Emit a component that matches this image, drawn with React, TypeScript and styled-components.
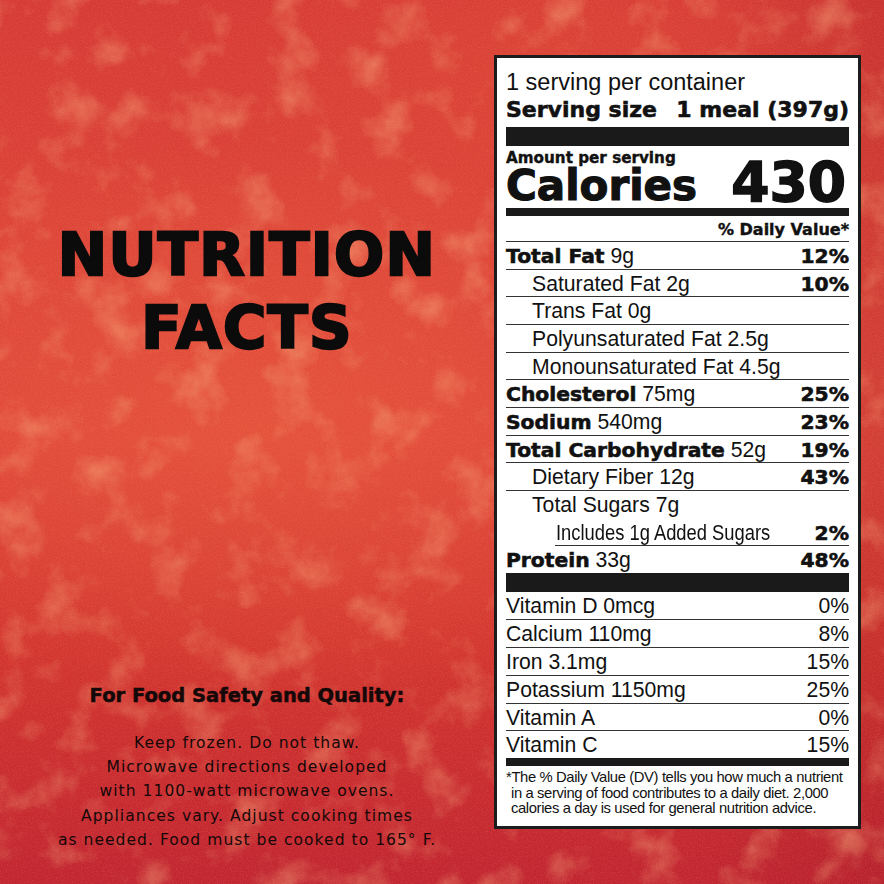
import React from 'react';
import styled, { createGlobalStyle } from 'styled-components';

const LABEL_FONT = '"Liberation Sans", Arial, sans-serif';
const HEAVY_FONT = '"DejaVu Sans", Verdana, sans-serif';

// soft mottled wash + fine grain, drawn as an svg filter
const TEXTURE =
  "url(\"data:image/svg+xml;utf8,<svg xmlns='http://www.w3.org/2000/svg' width='884' height='884'>" +
  "<filter id='a' x='0' y='0' width='100%' height='100%'><feTurbulence type='fractalNoise' baseFrequency='0.022' numOctaves='5' seed='11'/>" +
  "<feColorMatrix values='0 0 0 0 0.95  0 0 0 0 0.44  0 0 0 0 0.22  0 0 0 1.1 -0.55'/></filter>" +
  "<filter id='b' x='0' y='0' width='100%' height='100%'><feTurbulence type='fractalNoise' baseFrequency='0.8' numOctaves='2' seed='3'/>" +
  "<feColorMatrix values='0 0 0 0 0.94  0 0 0 0 0.42  0 0 0 0 0.26  0 0 0 0.35 -0.15'/></filter>" +
  "<rect width='884' height='884' filter='url(%23a)'/><rect width='884' height='884' filter='url(%23b)'/></svg>\")";

const GlobalStyle = createGlobalStyle`
  html, body {
    margin: 0;
    padding: 0;
  }
  body {
    font-family: ${LABEL_FONT};
    color: #111;
  }
`;

interface INutrient {
  id: number;
  name: string;
  amount?: string;
  dv?: string;
  level: 0 | 1 | 2;
  bold?: boolean;
  noLine?: boolean;
}

const NUTRIENTS: INutrient[] = [
  { id: 1, name: 'Total Fat', amount: '9g', dv: '12%', level: 0, bold: true },
  { id: 2, name: 'Saturated Fat', amount: '2g', dv: '10%', level: 1 },
  { id: 3, name: 'Trans Fat', amount: '0g', level: 1 },
  { id: 4, name: 'Polyunsaturated Fat', amount: '2.5g', level: 1 },
  { id: 5, name: 'Monounsaturated Fat', amount: '4.5g', level: 1 },
  { id: 6, name: 'Cholesterol', amount: '75mg', dv: '25%', level: 0, bold: true },
  { id: 7, name: 'Sodium', amount: '540mg', dv: '23%', level: 0, bold: true },
  { id: 8, name: 'Total Carbohydrate', amount: '52g', dv: '19%', level: 0, bold: true },
  { id: 9, name: 'Dietary Fiber', amount: '12g', dv: '43%', level: 1 },
  { id: 10, name: 'Total Sugars', amount: '7g', level: 1, noLine: true },
  { id: 11, name: 'Includes 1g Added Sugars', dv: '2%', level: 2 },
  { id: 12, name: 'Protein', amount: '33g', dv: '48%', level: 0, bold: true, noLine: true },
];

const VITAMINS = [
  { id: 1, name: 'Vitamin D 0mcg', dv: '0%' },
  { id: 2, name: 'Calcium 110mg', dv: '8%' },
  { id: 3, name: 'Iron 3.1mg', dv: '15%' },
  { id: 4, name: 'Potassium 1150mg', dv: '25%' },
  { id: 5, name: 'Vitamin A', dv: '0%' },
  { id: 6, name: 'Vitamin C', dv: '15%' },
];

const Page = styled.div`
  display: flex;
  width: 884px;
  height: 884px;
  overflow: hidden;
  background:
    ${TEXTURE},
    radial-gradient(ellipse 50% 32% at 30% 48%, rgba(234, 96, 62, 0.45), rgba(234, 96, 62, 0) 100%),
    radial-gradient(ellipse 40% 22% at 60% 6%, rgba(228, 84, 58, 0.3), rgba(228, 84, 58, 0) 100%),
    linear-gradient(90deg, rgba(0, 0, 0, 0) 78%, rgba(110, 0, 20, 0.12) 100%),
    linear-gradient(180deg, #d63a35 0%, #dd4438 28%, #e0473a 50%, #d2352f 74%, #c12531 100%);
`;

const LeftPanel = styled.div`
  width: 494px;
  flex-shrink: 0;
  display: flex;
  flex-direction: column;
  align-items: center;
  justify-content: space-between;
  padding: 218px 0 32px;
  box-sizing: border-box;
`;

const Title = styled.h1`
  margin: 0;
  font-family: ${HEAVY_FONT};
  font-weight: 700;
  font-size: 59px;
  line-height: 73px;
  letter-spacing: 1.3px;
  text-align: center;
  color: #0b0b0b;
  -webkit-text-stroke: 2.4px #0b0b0b;
`;

const Safety = styled.div`
  display: flex;
  flex-direction: column;
  align-items: center;
  color: #140808;
`;

const SafetyHeading = styled.h2`
  margin: 0 0 22.5px;
  font-family: ${HEAVY_FONT};
  font-weight: 700;
  font-size: 19.5px;
  line-height: 24px;
  -webkit-text-stroke: 0.5px #140808;
`;

const SafetyText = styled.p`
  margin: 0;
  font-family: ${HEAVY_FONT};
  font-size: 15.5px;
  line-height: 24.25px;
  letter-spacing: 1.05px;
  text-align: center;
`;

const Label = styled.section`
  align-self: flex-start;
  margin-top: 55px;
  width: 367px;
  height: 774px;
  box-sizing: border-box;
  border: 3px solid #1c1c1c;
  background: #fff;
  padding: 11px 9px 0;
  color: #111;
`;

const Servings = styled.div`
  font-size: 23.5px;
  line-height: 27px;
`;

const ServingSize = styled.div`
  display: flex;
  justify-content: space-between;
  font-family: ${HEAVY_FONT};
  font-weight: 700;
  font-size: 22px;
  line-height: 27px;
  -webkit-text-stroke: 0.6px #111;
`;

const Bar = styled.div<{ thick: number; gap?: number }>`
  height: ${({ thick }) => thick}px;
  margin-top: ${({ gap }) => gap || 0}px;
  background: #1a1a1a;
`;

const CaloriesBlock = styled.div`
  display: flex;
  justify-content: space-between;
  align-items: flex-end;
  margin-top: 4px;
`;

const CaloriesLeft = styled.div`
  display: flex;
  flex-direction: column;
`;

const AmountPer = styled.div`
  font-family: ${HEAVY_FONT};
  font-weight: 700;
  font-size: 15.2px;
  line-height: 16px;
  -webkit-text-stroke: 0.4px #111;
`;

const CaloriesWord = styled.div`
  font-family: ${HEAVY_FONT};
  font-weight: 700;
  font-size: 42px;
  line-height: 40px;
  -webkit-text-stroke: 1.2px #111;
`;

const CaloriesValue = styled.div`
  font-family: ${HEAVY_FONT};
  font-weight: 700;
  font-size: 55px;
  line-height: 48px;
  margin-right: 3px;
  -webkit-text-stroke: 1.6px #111;
`;

const DvHeader = styled.div`
  padding-top: 4px;
  padding-bottom: 1px;
  border-bottom: 1px solid #333;
  text-align: right;
  font-family: ${HEAVY_FONT};
  font-weight: 700;
  font-size: 16px;
  line-height: 20px;
  -webkit-text-stroke: 0.4px #111;
`;

const Row = styled.div<{ level: number; noLine?: boolean }>`
  display: flex;
  justify-content: space-between;
  align-items: baseline;
  box-sizing: border-box;
  height: 27.67px;
  padding-top: 2px;
  padding-left: ${({ level }) => (level === 1 ? 26 : level === 2 ? 1 : 0)}px;
  margin-left: ${({ level }) => (level === 2 ? 49 : 0)}px;
  border-bottom: 1px solid ${({ noLine }) => (noLine ? 'transparent' : '#333')};
  font-size: 21.2px;
  line-height: 24.7px;
  white-space: nowrap;
`;

const NutrientName = styled.span<{ bold?: boolean }>`
  font-family: ${({ bold }) => (bold ? HEAVY_FONT : LABEL_FONT)};
  font-weight: ${({ bold }) => (bold ? 700 : 400)};
  font-size: ${({ bold }) => (bold ? '20.3px' : '21.2px')};
  -webkit-text-stroke: ${({ bold }) => (bold ? '0.6px #111' : '0')};
`;

const Condensed = styled.span`
  display: inline-block;
  transform: scaleX(0.866);
  transform-origin: left center;
`;

const Amount = styled.span`
  font-family: ${LABEL_FONT};
  font-weight: 400;
  font-size: 21.2px;
`;

const Percent = styled.span<{ bold?: boolean }>`
  font-family: ${({ bold }) => (bold ? HEAVY_FONT : LABEL_FONT)};
  font-weight: ${({ bold }) => (bold ? 700 : 400)};
  font-size: ${({ bold }) => (bold ? '20.3px' : '21.2px')};
  -webkit-text-stroke: ${({ bold }) => (bold ? '0.6px #111' : '0')};
`;

const VitaminRow = styled.div<{ last?: boolean }>`
  display: flex;
  justify-content: space-between;
  align-items: baseline;
  box-sizing: border-box;
  height: ${({ last }) => (last ? 27 : 27.8)}px;
  padding-top: 2px;
  border-bottom: ${({ last }) => (last ? 'none' : '1px solid #333')};
  font-size: 21.2px;
  line-height: 24.5px;
`;

const Footnote = styled.p`
  margin: 4px 0 0;
  padding-left: 5px;
  text-indent: -5px;
  font-size: 14.8px;
  line-height: 15.8px;
  letter-spacing: -0.38px;
  white-space: nowrap;
`;

const App: React.FC = () => (
  <Page>
    <GlobalStyle />
    <LeftPanel>
      <Title>
        NUTRITION
        <br />
        FACTS
      </Title>
      <Safety>
        <SafetyHeading>For Food Safety and Quality:</SafetyHeading>
        <SafetyText>
          Keep frozen. Do not thaw.
          <br />
          Microwave directions developed
          <br />
          with 1100-watt microwave ovens.
          <br />
          Appliances vary. Adjust cooking times
          <br />
          as needed. Food must be cooked to 165° F.
        </SafetyText>
      </Safety>
    </LeftPanel>

    <Label>
      <Servings>1 serving per container</Servings>
      <ServingSize>
        <span>Serving size</span>
        <span>1 meal (397g)</span>
      </ServingSize>
      <Bar thick={19} gap={4} />
      <CaloriesBlock>
        <CaloriesLeft>
          <AmountPer>Amount per serving</AmountPer>
          <CaloriesWord>Calories</CaloriesWord>
        </CaloriesLeft>
        <CaloriesValue>430</CaloriesValue>
      </CaloriesBlock>
      <Bar thick={8} gap={2} />
      <DvHeader>% Daily Value*</DvHeader>
      {NUTRIENTS.map(({ id, name, amount, dv, level, bold, noLine }) => (
        <Row key={id} level={level} noLine={noLine}>
          <span>
            <NutrientName bold={bold}>
              {level === 2 ? <Condensed>{name}</Condensed> : name}
            </NutrientName>
            {amount && <Amount> {amount}</Amount>}
          </span>
          {dv && <Percent bold>{dv}</Percent>}
        </Row>
      ))}
      <Bar thick={19} gap={-0.5} />
      {VITAMINS.map(({ id, name, dv }, i) => (
        <VitaminRow key={id} last={i === VITAMINS.length - 1}>
          <span>{name}</span>
          <Percent>{dv}</Percent>
        </VitaminRow>
      ))}
      <Bar thick={7.5} />
      <Footnote>
        *The % Daily Value (DV) tells you how much a nutrient
        <br />
        in a serving of food contributes to a daily diet. 2,000
        <br />
        calories a day is used for general nutrition advice.
      </Footnote>
    </Label>
  </Page>
);

export default App;
